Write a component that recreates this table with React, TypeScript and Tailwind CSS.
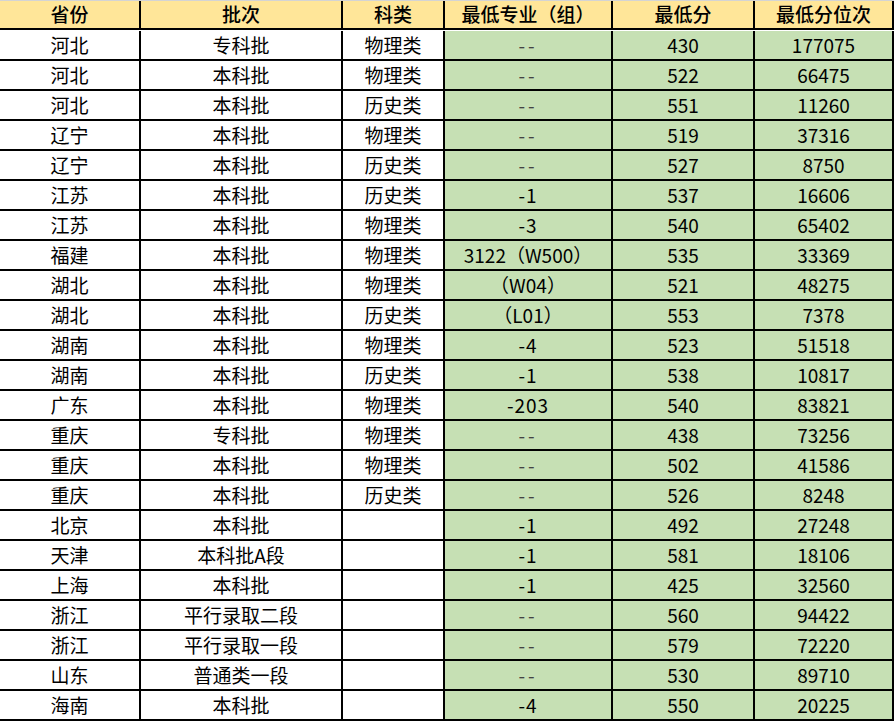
import React from "react";

type Row = [string, string, string, string, string, string];

const rows: Row[] = [
  ["河北", "专科批", "物理类", "--", "430", "177075"],
  ["河北", "本科批", "物理类", "--", "522", "66475"],
  ["河北", "本科批", "历史类", "--", "551", "11260"],
  ["辽宁", "本科批", "物理类", "--", "519", "37316"],
  ["辽宁", "本科批", "历史类", "--", "527", "8750"],
  ["江苏", "本科批", "历史类", "-1", "537", "16606"],
  ["江苏", "本科批", "物理类", "-3", "540", "65402"],
  ["福建", "本科批", "物理类", "3122（W500）", "535", "33369"],
  ["湖北", "本科批", "物理类", "（W04）", "521", "48275"],
  ["湖北", "本科批", "历史类", "（L01）", "553", "7378"],
  ["湖南", "本科批", "物理类", "-4", "523", "51518"],
  ["湖南", "本科批", "历史类", "-1", "538", "10817"],
  ["广东", "本科批", "物理类", "-203", "540", "83821"],
  ["重庆", "专科批", "物理类", "--", "438", "73256"],
  ["重庆", "本科批", "物理类", "--", "502", "41586"],
  ["重庆", "本科批", "历史类", "--", "526", "8248"],
  ["北京", "本科批", "", "-1", "492", "27248"],
  ["天津", "本科批A段", "", "-1", "581", "18106"],
  ["上海", "本科批", "", "-1", "425", "32560"],
  ["浙江", "平行录取二段", "", "--", "560", "94422"],
  ["浙江", "平行录取一段", "", "--", "579", "72220"],
  ["山东", "普通类一段", "", "--", "530", "89710"],
  ["海南", "本科批", "", "-4", "550", "20225"],
];

const headers = ["省份", "批次", "科类", "最低专业（组）", "最低分", "最低分位次"];

const cell = "flex items-center justify-center border-r-2 border-b-2 border-black whitespace-nowrap pb-[2px]";

export default function App() {
  return (
    <div
      className="w-[894px] bg-white text-[19px] text-black border-t border-[#d4d4d4]"
      style={{ fontFamily: '"Noto Sans CJK SC", "Noto Sans", sans-serif' }}
    >
      <div className="grid grid-cols-[141px_202px_102px_168px_142px_139px] auto-rows-[30px] [&>*]:leading-none">
        {headers.map((h) => (
          <div key={h} className={`${cell} h-[29px] bg-[#ffe699] font-medium`}>
            {h}
          </div>
        ))}
        {rows.map((r, i) => (
          <React.Fragment key={i}>
            <div className={`${cell} bg-white`}>{r[0]}</div>
            <div className={`${cell} bg-white`}>{r[1]}</div>
            <div className={`${cell} bg-white`}>{r[2]}</div>
            <div
              className={`${cell} bg-[#c6e0b4] ${
                r[3] === "--" ? "text-[#444] tracking-[3px]" : r[3].startsWith("-") ? "tracking-[1px]" : ""
              }`}
            >
              {r[3]}
            </div>
            <div className={`${cell} bg-[#c6e0b4]`}>{r[4]}</div>
            <div className={`${cell} bg-[#c6e0b4]`}>{r[5]}</div>
          </React.Fragment>
        ))}
      </div>
    </div>
  );
}
